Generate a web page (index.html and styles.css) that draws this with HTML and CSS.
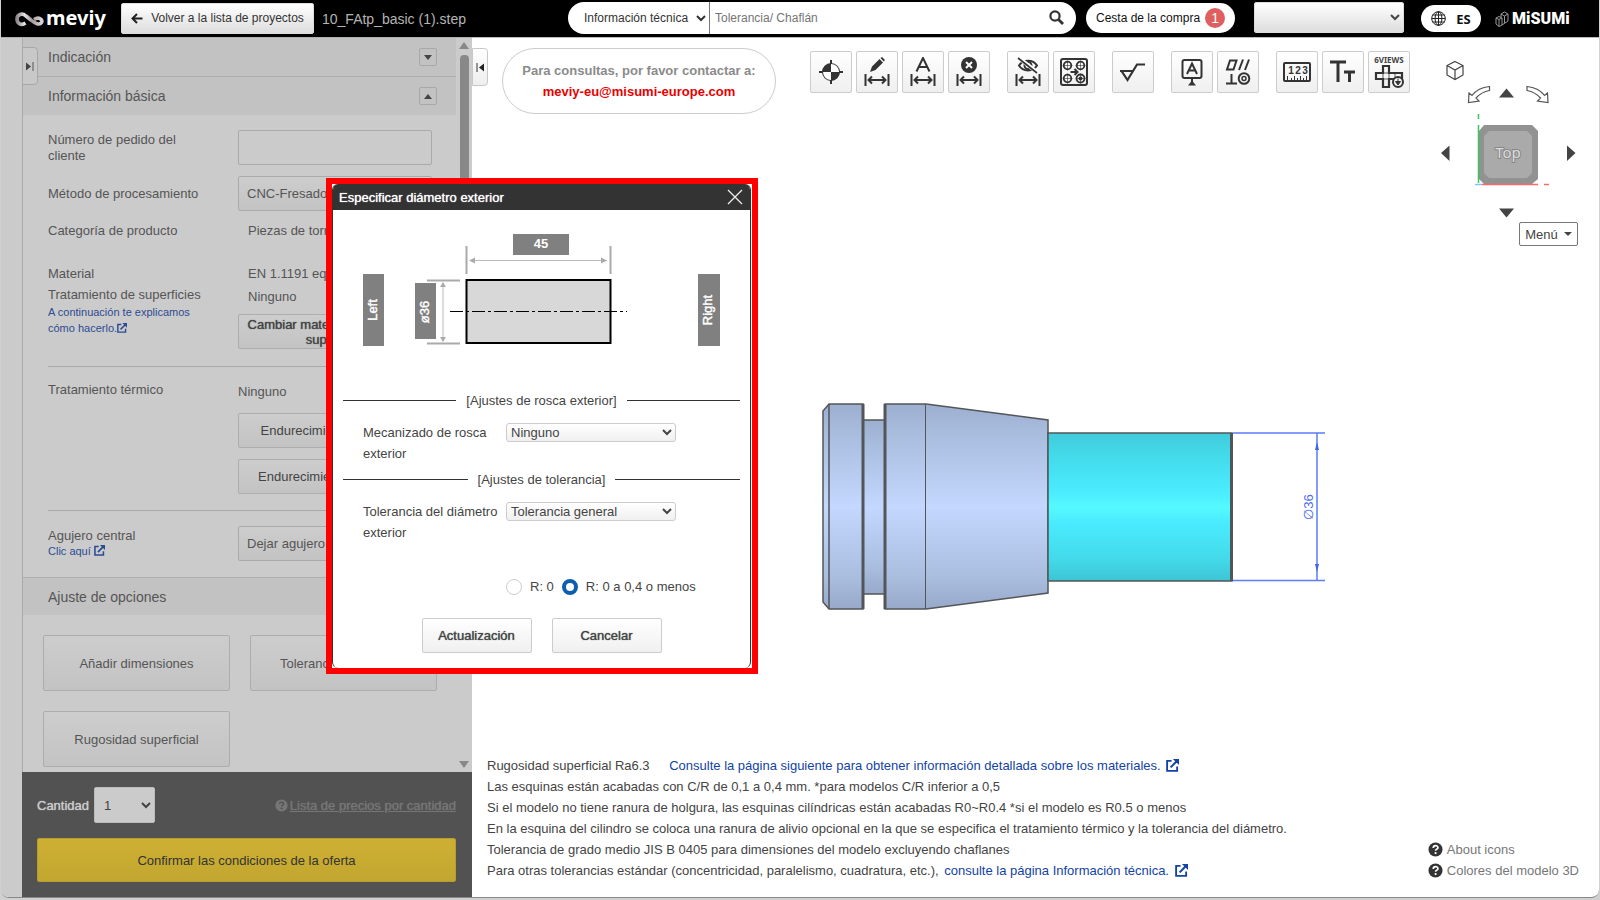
FILE: index.html
```html
<!DOCTYPE html>
<html lang="es">
<head>
<meta charset="utf-8">
<title>meviy</title>
<link rel="stylesheet" href="styles.css">
</head>
<body>
<svg class="defs" width="0" height="0" aria-hidden="true">
  <defs>
    <symbol id="ext" viewBox="0 0 14 14"><path d="M6 2H1.2v10.8H12V8" fill="none" stroke="currentColor" stroke-width="2"/><path d="M5 9l6.500-6.500" stroke="currentColor" stroke-width="2.200"/><path d="M7.500 0H14v6.500z" fill="currentColor"/></symbol>
    <symbol id="help" viewBox="0 0 16 16"><circle cx="8" cy="8" r="7.500" fill="currentColor"/><path d="M5.600 6.300c0-3.200 5-3.200 5-.3 0 1.600-2.500 1.700-2.500 3.300" fill="none" stroke="var(--mark)" stroke-width="1.800"/><circle cx="8.100" cy="11.800" r="1.200" fill="var(--mark)"/></symbol>
    <symbol id="span" viewBox="0 0 26 12"><path d="M1.500 0v12M24.500 0v12M4 6h18M8 2.500L4.500 6 8 9.500M18 2.500L21.500 6 18 9.500" fill="none" stroke="#333" stroke-width="2"/></symbol>
    <linearGradient id="loop"><stop offset="0" stop-color="#8f888d"/><stop offset=".3" stop-color="#e8e4e6"/><stop offset=".6" stop-color="#a39ca1"/><stop offset="1" stop-color="#d8d4d6"/></linearGradient>
  </defs>
</svg>
<div class="app">
  <header class="topbar">
    <a class="brand" href="#"><svg width="29" height="16" viewBox="0 0 29 16"><path d="M10.500 12C6 15 2 12.500 2 8S7 1.500 11 5l5 4c4 3.500 8.500 5.500 10.500 2.500 1.500-3.500-3-6-7.500-3" fill="none" stroke="url(#loop)" stroke-width="3.600"/></svg><span>meviy</span></a>
    <button class="back"><svg width="12" height="11" viewBox="0 0 12 11"><path d="M11.500 5.500H2M6 1L1.500 5.500 6 10" fill="none" stroke="#222" stroke-width="2"/></svg>Volver a la lista de proyectos</button>
    <span class="filename">10_FAtp_basic (1).step</span>
    <form class="search">
      <select aria-label="Tipo de búsqueda"><option>Información técnica</option></select>
      <input type="text" aria-label="Buscar" placeholder="Tolerancia/ Chaflán">
      <button type="button" aria-label="Buscar"><svg width="15" height="15" viewBox="0 0 15 15"><circle cx="6" cy="6" r="4.600" fill="none" stroke="#333" stroke-width="2.200"/><path d="M9.500 9.500l4.500 4.500" stroke="#333" stroke-width="2.800"/></svg></button>
    </form>
    <button class="cart">Cesta de la compra<span class="count">1</span></button>
    <select class="user" aria-label="Usuario"><option></option></select>
    <button class="lang"><svg width="15" height="15" viewBox="0 0 15 15"><g fill="none" stroke="#222"><circle cx="7.500" cy="7.500" r="6.800"/><ellipse cx="7.500" cy="7.500" rx="3.400" ry="6.800"/><path d="M7.500.5v14M.5 7.500h14M1.500 4h12M1.500 11h12"/></g></svg>ES</button>
    <a class="misumi" href="#"><svg width="14" height="16" viewBox="0 0 14 16"><g fill="none" stroke="#999" stroke-width="1"><path d="M1 7l3-1.500L7 7v7l-3 1.500L1 13zM1 7l3 1.500L7 7M4 8.500v7M6 3l3.500-2L13 3v7l-6 4M6 3v3.500M6 3l3.500 2L13 3M9.500 5v7"/></g></svg><span>MiSUMi</span></a>
  </header>

  <div class="work">
    <aside class="panel">
      <button class="tab tab-left" aria-label="Mostrar panel"><svg width="8" height="9" viewBox="0 0 8 9"><path d="M0 .5l5 4-5 4z" fill="#444"/><path d="M7 0v9" stroke="#555" stroke-width="1"/></svg></button>
      <div class="scroll">
        <div class="content">
          <h2 class="head head-line">Indicación<button aria-label="Abrir"><i class="down"></i></button></h2>
          <h2 class="head">Información básica<button aria-label="Cerrar"><i class="up"></i></button></h2>
          <div class="form">
            <div class="row row-first"><label for="order">Número de pedido del<br>cliente</label><input id="order" class="field" type="text"></div>
            <div class="row row-mid"><label for="method">Método de procesamiento</label><select id="method" class="field"><option>CNC-Fresado</option></select></div>
            <div class="row row-cat"><span>Categoría de producto</span><span class="inset">Piezas de torneado</span></div>
            <div class="row row-mat">
              <div><p class="line">Material</p><p class="line-2">Tratamiento de superficies</p><a class="small" href="#">A continuación te explicamos cómo hacerlo.<svg width="10" height="10"><use href="#ext"/></svg></a></div>
              <div><p class="line inset">EN 1.1191 equiv.</p><p class="line-3 inset">Ninguno</p><button class="field btn wrap firm">Cambiar material / tratamiento<br>superficial</button></div>
            </div>
            <div class="row row-heat">
              <p class="line">Tratamiento térmico</p>
              <div class="stack"><p class="line">Ninguno</p><button class="field btn">Endurecimiento inducción</button><button class="field btn">Endurecimiento y revenido</button></div>
            </div>
            <div class="row row-hole">
              <div><label for="hole">Agujero central</label><a class="small tight" href="#">Clic aquí <svg width="11" height="11"><use href="#ext"/></svg></a></div>
              <select id="hole" class="field"><option>Dejar agujero central</option></select>
            </div>
          </div>
          <h2 class="head head-top">Ajuste de opciones</h2>
          <div class="options"><button class="btn">Añadir dimensiones</button><button class="btn">Tolerancia geométrica</button><button class="btn">Rugosidad superficial</button></div>
        </div>
        <div class="bar"><i class="up"></i><div class="thumb"></div><i class="down"></i></div>
      </div>
      <footer class="order">
        <div class="qty"><label class="firm" for="qty">Cantidad</label><select id="qty"><option>1</option></select><a href="#"><svg width="13" height="13"><use href="#help"/></svg><span>Lista de precios por cantidad</span></a></div>
        <button class="confirm">Confirmar las condiciones de la oferta</button>
      </footer>
    </aside>

    <main class="view">
      <button class="tab tab-right" aria-label="Ocultar panel"><svg width="8" height="9" viewBox="0 0 8 9"><path d="M8 .5l-5 4 5 4z" fill="#222"/><path d="M1 0v9" stroke="#333" stroke-width="1"/></svg></button>
      <div class="tools">
        <p class="contact">Para consultas, por favor contactar a:<br><a href="#">meviy-eu@misumi-europe.com</a></p>
        <div class="group">
          <button aria-label="Origen"><svg width="26" height="26" viewBox="0 0 26 26"><path d="M13 1v24M1 13h24" stroke="#333" stroke-width="2"/><circle cx="13" cy="13" r="8" fill="#fff" stroke="#333" stroke-width="2"/><path d="M13 13V5a8 8 0 0 1 8 8zM13 13H5a8 8 0 0 0 8 8z" fill="#fff"/><path d="M13 13V5a8 8 0 0 0-8 8zM13 13h8a8 8 0 0 1-8 8z" fill="#333"/></svg></button>
          <button aria-label="Editar cota"><svg width="26" height="30" viewBox="0 0 26 30"><path d="M6 15l2-5.500L15.500 2l3.500 3.500L11.500 13z M16.500 1L18 0l3 3-1.200 1.500z" fill="#333"/><use href="#span" y="17" width="26" height="12"/></svg></button>
          <button aria-label="Cota automática"><svg width="26" height="30" viewBox="0 0 26 30"><path d="M6.500 14.500L13 1l6.500 13.500M9 10h8" fill="none" stroke="#333" stroke-width="2"/><use href="#span" y="17" width="26" height="12"/></svg></button>
          <button aria-label="Borrar cota"><svg width="26" height="30" viewBox="0 0 26 30"><circle cx="13" cy="8" r="8" fill="#333"/><path d="M10 5l6 6M16 5l-6 6" stroke="#fff" stroke-width="2"/><use href="#span" y="17" width="26" height="12"/></svg></button>
        </div>
        <div class="group">
          <button aria-label="Ocultar cotas"><svg width="26" height="30" viewBox="0 0 26 30"><path d="M4 8.500C8 2 18 2 22 8.500 18 15 8 15 4 8.500z" fill="none" stroke="#333" stroke-width="2"/><circle cx="13" cy="8.500" r="3.500" fill="none" stroke="#333" stroke-width="2"/><path d="M4 1l19 15" stroke="#fff" stroke-width="4"/><path d="M3 1l19 15" stroke="#333" stroke-width="1.600"/><use href="#span" y="17" width="26" height="12"/></svg></button>
          <button aria-label="Agujeros"><svg width="28" height="28" viewBox="0 0 28 28"><rect x="1" y="1" width="26" height="26" rx="2" fill="none" stroke="#333" stroke-width="2"/><g fill="none" stroke="#333" stroke-width="1.800"><circle cx="7.500" cy="7.500" r="3.800"/><circle cx="20.500" cy="7.500" r="3.800"/><circle cx="7.500" cy="20.500" r="3.800"/><circle cx="20.500" cy="20.500" r="4"/><path d="M10.500 14h7M14.500 11l3 3-3 3" stroke-width="2"/></g><g stroke="#333" stroke-width=".6"><path d="M2.500 7.500h10M7.500 2.500v10M15.500 7.500h10M20.500 2.500v10M2.500 20.500h10M7.500 15.500v10M15.500 20.500h10M20.500 15.500v10"/></g><circle cx="20.500" cy="20.500" r="2" fill="#333"/></svg></button>
        </div>
        <div class="group"><button aria-label="Rugosidad"><svg width="26" height="22" viewBox="0 0 26 22"><path d="M0 10h13M1.500 10l6 9L17 3.500h8" fill="none" stroke="#333" stroke-width="2.200"/></svg></button></div>
        <div class="group">
          <button aria-label="Referencia"><svg width="22" height="28" viewBox="0 0 22 28"><rect x="1.500" y="2" width="19" height="18" rx="2" fill="none" stroke="#333" stroke-width="2"/><path d="M6 16L11 5.500 16 16M8 12.500h6M11 20v5" fill="none" stroke="#333" stroke-width="2"/><path d="M7 27.500l4-5 4 5z" fill="#333"/></svg></button>
          <button aria-label="Tolerancia geométrica"><svg width="26" height="28" viewBox="0 0 26 28"><path d="M2 11.500L5 2.500h6.500l-3 9zM14 12l4-10.500M20 12l4-10.500M6.500 16v9M1 25.500h11" fill="none" stroke="#333" stroke-width="2"/><circle cx="19" cy="20.500" r="5.300" fill="none" stroke="#333" stroke-width="2"/><circle cx="19" cy="20.500" r="2" fill="none" stroke="#333" stroke-width="1.500"/></svg></button>
        </div>
        <div class="group">
          <button aria-label="Medir"><svg width="28" height="20" viewBox="0 0 28 20"><rect x="1" y="1" width="26" height="18" rx="1" fill="none" stroke="#333" stroke-width="2"/><path d="M4.500 14v4M8.500 16v2M11.500 14v4M14.500 16v2M17.500 14v4M20.500 16v2M23.500 14v4" stroke="#333"/><g font-size="10" font-weight="700" fill="#333" text-anchor="middle"><text x="8" y="12">1</text><text x="15" y="12">2</text><text x="22" y="12">3</text></g></svg></button>
          <button aria-label="Texto"><svg width="26" height="24" viewBox="0 0 26 24"><path d="M0 2h16M8 2v20M14 12h11M19.500 12v10" stroke="#333" stroke-width="3" fill="none"/></svg></button>
          <button aria-label="Seis vistas" class="six"><span>6VIEWS</span><svg width="30" height="25" viewBox="0 0 30 25"><path d="M9 2h6v7h13v6H15v8H9v-8H2V9h7z" fill="none" stroke="#333" stroke-width="2.200"/><path d="M9 9h6v6H9zM21 9v6" fill="none" stroke="#333" stroke-width=".8"/><circle cx="24" cy="18" r="5" fill="#f4f4f4" stroke="#333" stroke-width="2"/><path d="M24 14.500v3M21.500 17.500h5L24 21z" fill="#333" stroke="#333"/></svg></button>
        </div>
      </div>

      <div class="navigator">
        <svg width="145" height="160" viewBox="1436 58 145 160" aria-label="Top">
          <g fill="none" stroke="#444" stroke-width="1.200"><path d="M1455 61.500l8 4v9.500l-8 4.500-8-4.500v-9.500zM1447 65.500l8 4.500 8-4.500M1455 70v9.500"/><path d="M1468.500 102.500l.5-9.500 3 2.500q6-8 17.500-9v4q-8 1.500-13.500 7.500l3 3zM1548 102.500l-.5-9.500-3 2.500q-6-8-17.500-9v4q8 1.500 13.500 7.500l-3 3z" stroke="#555"/></g>
          <path d="M1499 97.500l7.500-9 7.500 9zM1499 208.500l7.500 9 7.500-9zM1449.500 145.500l-8.500 7.500 8.500 8zM1567 145.500l8.500 7.500-8.500 8z" fill="#444"/>
          <path d="M1484 125h48l6 6v48l-6 5h-48l-5-5v-48z" fill="#929292"/><path d="M1489 131h38l5 5v37l-5 5h-38l-5-5v-37z" fill="#aaa"/>
          <path d="M1478.500 114v5M1478.500 125v58" stroke="#35c759" stroke-width="1.500"/><path d="M1482 184.500h56M1544 184.500h5" stroke="#f66a6a" stroke-width="1.500"/><path d="M1475 184.500h7" stroke="#8bbcff" stroke-width="1.500"/>
          <text x="1508" y="158" text-anchor="middle" font-size="15" fill="#ddd" stroke="#888" stroke-width="2" paint-order="stroke" class="cube-text">Top</text>
        </svg>
        <button>Menú<i class="down"></i></button>
      </div>

      <div class="stage">
        <svg class="model" width="550" height="250" viewBox="800 380 550 250">
          <defs>
            <linearGradient id="steel" x2="0" y2="1"><stop offset="0" stop-color="#9dafcf"/><stop offset=".15" stop-color="#a9bddf"/><stop offset=".5" stop-color="#c4d8ff"/><stop offset=".85" stop-color="#a9bddf"/><stop offset="1" stop-color="#98a9ca"/></linearGradient>
            <linearGradient id="cyan" x2="0" y2="1"><stop offset="0" stop-color="#40cbdc"/><stop offset=".15" stop-color="#43daea"/><stop offset=".4" stop-color="#4aecff"/><stop offset=".5" stop-color="#55faff"/><stop offset=".6" stop-color="#4aecff"/><stop offset=".85" stop-color="#43daea"/><stop offset="1" stop-color="#3dc4d4"/></linearGradient>
          </defs>
          <g stroke="#535558" stroke-width="1.500">
            <rect x="863" y="420" width="22" height="174" fill="url(#steel)"/>
            <path d="M829 404h34v205h-34l-6-7V411z" fill="url(#steel)"/><path d="M829 404v205"/>
            <path d="M885 404h41l122 16v173l-122 16h-41z" fill="url(#steel)"/><path d="M925.500 404v205" stroke-width="1"/>
            <rect x="1048" y="433" width="184" height="148" fill="url(#cyan)"/>
            <path d="M863 404v205M885 404v205M1231.500 433v148" stroke-width="3"/>
          </g>
          <g stroke="#5c7cf5" stroke-width="1.500"><path d="M1233 433h92M1233 580.500h92M1317 433v147"/></g>
          <path d="M1317 442l-2 8h4zM1317 572l-2-8h4z" fill="#3f64f0"/>
          <text transform="translate(1313 507) rotate(-90)" text-anchor="middle" font-size="13" fill="#4a6bf5">∅36</text>
        </svg>
      </div>

      <div class="notes">
        <div>
          <p>Rugosidad superficial Ra6.3 <a class="lead" href="#">Consulte la página siguiente para obtener información detallada sobre los materiales. <svg width="13" height="13"><use href="#ext"/></svg></a></p>
          <p>Las esquinas están acabadas con C/R de 0,1 a 0,4 mm. *para modelos C/R inferior a 0,5</p>
          <p>Si el modelo no tiene ranura de holgura, las esquinas cilíndricas están acabadas R0~R0.4 *si el modelo es R0.5 o menos</p>
          <p>En la esquina del cilindro se coloca una ranura de alivio opcional en la que se especifica el tratamiento térmico y la tolerancia del diámetro.</p>
          <p>Tolerancia de grado medio JIS B 0405 para dimensiones del modelo excluyendo chaflanes</p>
          <p>Para otras tolerancias estándar (concentricidad, paralelismo, cuadratura, etc.), <a class="next" href="#">consulte la página Información técnica. <svg width="13" height="13"><use href="#ext"/></svg></a></p>
        </div>
        <div class="guides"><a href="#"><svg width="15" height="15"><use href="#help"/></svg>About icons</a><a href="#"><svg width="15" height="15"><use href="#help"/></svg>Colores del modelo 3D</a></div>
      </div>
    </main>
  </div>

  <section class="dialog" role="dialog" aria-labelledby="dlg">
    <div class="sheet">
      <header><h1 id="dlg" class="firm">Especificar diámetro exterior</h1><button aria-label="Cerrar"><svg width="16" height="16" viewBox="0 0 16 16"><path d="M1 1l14 14M15 1L1 15" stroke="#eee" stroke-width="1.300"/></svg></button></header>
      <svg class="diagram" viewBox="333 210 418 180" width="418" height="180">
        <g fill="#808080"><rect x="513" y="234" width="56" height="21"/><rect x="363" y="274" width="21" height="72"/><rect x="415" y="283" width="21" height="56"/><rect x="698" y="274" width="22" height="72"/></g>
        <rect x="466.500" y="280" width="144" height="63" fill="#d8d8d8" stroke="#000" stroke-width="2"/>
        <path d="M450 311.500h177" stroke="#000" stroke-width="1.200" stroke-dasharray="13 3 3 3" />
        <path d="M466.500 246v28M610.500 246v28M427 280.500h33M427 343.500h33" stroke="#aaa" stroke-width="2"/>
        <path d="M470 260.500h137M443 283v58" stroke="#bbb"/>
        <path d="M469 260.500l6-3v6zM607 260.500l-6-3v6zM443 282l-3 5h6zM443 342l-3-5h6z" fill="#aaa"/>
        <g fill="#fff" font-size="13" text-anchor="middle"><text x="541" y="248" font-weight="700">45</text><text class="mark" transform="translate(377 310) rotate(-90)">Left</text><text class="mark" transform="translate(429 312) rotate(-90)">ø36</text><text class="mark" transform="translate(712 310) rotate(-90)">Right</text></g>
      </svg>
      <h3>[Ajustes de rosca exterior]</h3>
      <div class="pair"><label for="thread">Mecanizado de rosca exterior</label><select id="thread"><option>Ninguno</option></select></div>
      <h3 class="second">[Ajustes de tolerancia]</h3>
      <div class="pair"><label for="tol">Tolerancia del diámetro exterior</label><select id="tol"><option>Tolerancia general</option></select></div>
      <div class="radios"><label><input type="radio" name="r">R: 0</label><label><input type="radio" name="r" checked>R: 0 a 0,4 o menos</label></div>
      <div class="actions"><button class="firm">Actualización</button><button class="firm">Cancelar</button></div>
    </div>
  </section>
</div>
</body>
</html>
```

FILE: styles.css
```css
* { box-sizing: border-box; }
body { margin: 0; background: #d0d0d0; }
body, button, input, select { font-family: "Liberation Sans", Arial, sans-serif; font-size: 13px; color: #444; }
button { padding: 0; cursor: pointer; }
h1, h2, h3, p { margin: 0; font-weight: 400; }
a { color: #1243a5; text-decoration: none; }
.defs { position: absolute; }
.firm { text-shadow: 0 0 1px currentColor; }
.mark { stroke: #fff; stroke-width: 0.4; }
.up, .down { display: block; width: 0; height: 0; border: 5px solid transparent; }
.up { border-top: 0; border-bottom-color: #444; }
.down { border-bottom: 0; border-top-color: #444; }

.app { position: relative; display: flex; flex-direction: column; height: calc(100vh - 2px); min-height: 780px; margin: 0 1px; background: #fff; border-bottom: 1px solid #888; border-radius: 0 0 8px 8px; overflow: hidden; }

.topbar { display: flex; align-items: center; height: 37px; padding-left: 14px; background: #000; flex: none; }
.brand { display: flex; align-items: center; gap: 2px; width: 106px; color: #fff; font: 700 20px/24px "Noto Sans", sans-serif; }
.brand span { padding-bottom: 2px; }
.back, .user { height: 31px; border: 1px solid #ddd; border-radius: 2px; background: linear-gradient(#fff, #ddd); }
.back { display: flex; align-items: center; justify-content: center; gap: 8px; width: 193px; margin-bottom: 1px; font-size: 12px; color: #333; }
.filename { width: 254px; padding-left: 8px; font-size: 14px; color: #b4b4b4; }
.search { display: flex; flex: 1; height: 32px; max-width: 508px; margin-bottom: 2px; border-radius: 16px; background: #fff; overflow: hidden; }
.search select { width: 142px; padding-left: 12px; border: 0; border-right: 1px solid #777; background: transparent; font-size: 12px; color: #333; }
.search input { flex: 1; min-width: 0; padding: 0 5px; border: 0; font-size: 12px; }
.search button { width: 40px; border: 0; background: transparent; }
.search button svg { display: block; margin: auto; }
.cart { display: flex; align-items: center; gap: 5px; height: 30px; margin: 0 0 2px 10px; padding: 0 10px; border: 0; border-radius: 15px; background: #fff; font-size: 12px; color: #111; }
.count { width: 20px; height: 20px; border-radius: 50%; background: #df5f60; color: #fff; font-size: 14px; line-height: 20px; }
.user { width: 150px; margin: 0 0 2px 19px; }
.lang { display: flex; align-items: center; justify-content: center; gap: 10px; width: 60px; height: 27px; margin-left: 17px; border: 0; border-radius: 14px; background: #fff; font: 700 13px "Noto Sans", sans-serif; color: #111; }
.misumi { display: flex; align-items: center; gap: 3px; margin: 0 auto 0 14px; color: #fff; font: 900 16px "Roboto", sans-serif; }

.work { display: flex; flex: 1; min-height: 0; }
.panel { position: relative; display: flex; flex-direction: column; width: 471px; flex: none; padding-left: 21px; background: #cbcbcb; border-top: 1px solid #b0b0b0; color: #555; }
.tab { display: flex; align-items: center; justify-content: center; width: 16px; height: 38px; border: 1px solid #c8c8c8; border-radius: 0 4px 4px 0; background: linear-gradient(#fff, #eee); }
.tab-left { position: absolute; left: 21px; top: 9px; border-color: #a8a8a8; background: #c8c8c8; }
.tab-right { position: absolute; left: 0; top: 10px; }
.scroll { display: flex; flex: 1; min-height: 0; overflow: hidden; border-left: 1px solid #aaa; }
.content { flex: 1; min-width: 0; }
.head { display: flex; align-items: center; justify-content: space-between; height: 38px; padding: 0 19px 0 25px; background: #c2c2c2; font-size: 14px; }
.head-line { border-bottom: 1px solid #aeaeae; height: 39px; }
.head-top { border-top: 1px solid #aeaeae; }
.head button { display: flex; align-items: center; justify-content: center; width: 18px; height: 18px; border: 1px solid #a8a8a8; border-radius: 2px; background: transparent; }
.head i { border-left-width: 4px; border-right-width: 4px; }
.form { padding: 15px 25px 0; }
.row { display: grid; grid-template-columns: 190px 194px; align-items: start; }
.row-first { line-height: 16px; }
.row-first label { padding-top: 2px; }
.row-mid { margin-top: 11px; align-items: center; }
.row-cat { margin-top: 11px; line-height: 18px; }
.row-mat { margin-top: 24px; padding-bottom: 17px; }
.row-heat { padding: 13px 0 16px; border-top: 1px solid #a8a8a8; }
.row-hole { padding: 15px 0 16px; border-top: 1px solid #a8a8a8; }
.row-hole label { display: block; padding-top: 1px; line-height: 18px; }
.field { width: 100%; height: 35px; border: 1px solid #aaa; border-radius: 2px; background: transparent; color: #555; }
select.field { padding-left: 4px; background: linear-gradient(#cdcdcd, #c3c3c3); }
.inset { padding-left: 10px; }
.line { line-height: 20px; }
.line-2 { margin-top: 2px; line-height: 18px; }
.line-3 { margin: 4px 0 8px; line-height: 18px; }
.small { display: block; width: 150px; font-size: 11px; line-height: 16px; color: #2b4c93; }
.small svg { vertical-align: -1px; }
.tight { line-height: 13px; }
.btn { border: 1px solid #adadad; border-radius: 2px; background: linear-gradient(#cdcdcd, #c3c3c3); color: #444; }
.wrap { line-height: 15px; text-align: center; }
.stack { display: grid; gap: 11px; padding-top: 2px; }
.options { display: grid; grid-template-columns: 187px 187px; gap: 20px; padding: 20px 20px 0; }
.options .btn { height: 56px; color: #555; }
.bar { display: flex; flex-direction: column; align-items: center; width: 16px; padding: 4px 0; flex: none; }
.bar i { border-left-width: 5px; border-right-width: 5px; }
.bar .up { border-bottom: 7px solid #888; }
.bar .down { border-top: 7px solid #888; }
.thumb { width: 9px; height: 260px; margin: 6px 0 auto; border-radius: 4px; background: #888; }
.order { padding: 15px 16px 15px 15px; height: 125px; background: #525252; flex: none; }
.qty { display: flex; align-items: center; gap: 5px; color: #ccc; }
.qty select { width: 61px; height: 36px; padding-left: 5px; border: 1px solid #bbb; border-radius: 2px; background: #cbcbcb; }
.qty a { display: flex; align-items: center; gap: 2px; margin-left: auto; color: #767676; --mark: #525252; }
.qty a span { text-decoration: underline; text-shadow: 0 0 1px currentColor; }
.confirm { width: 100%; height: 44px; margin-top: 15px; border: 1px solid #b79c2e; border-radius: 2px; background: linear-gradient(#cdb033, #c3a62f); color: #333; }

.view { position: relative; display: flex; flex-direction: column; flex: 1; min-width: 0; border-top: 1px solid #bbb; }
.tools { display: flex; align-items: flex-start; gap: 17px; padding: 10px 0 0 30px; }
.contact { width: 274px; height: 66px; margin-right: 17px; padding-top: 11px; border: 1px solid #ccc; border-radius: 33px; color: #8b8b8b; font-weight: 700; line-height: 21px; text-align: center; }
.contact a { color: #e80000; }
.group { display: flex; gap: 4px; padding-top: 3px; }
.group button { display: flex; flex-direction: column; align-items: center; justify-content: center; width: 42px; height: 42px; border: 1px solid #ccc; border-radius: 2px; background: linear-gradient(#fff, #efefef); }
.six span { font: 700 8px/9px "Noto Sans", sans-serif; }
.navigator { position: absolute; top: 20px; right: 18px; display: flex; flex-direction: column; align-items: flex-end; gap: 4px; }
.navigator button { display: flex; align-items: center; justify-content: center; gap: 6px; width: 59px; height: 24px; margin-right: 3px; border: 1px solid #777; border-radius: 2px; background: #fff; }
.navigator i { border-width: 4px; border-bottom: 0; }
.cube-text { font-family: "Noto Sans", sans-serif; }
.stage { display: flex; align-items: center; justify-content: center; flex: 1; min-height: 0; padding: 140px 0 0 78px; }
.notes { display: flex; align-items: flex-end; justify-content: space-between; padding: 0 20px 16px 15px; line-height: 21px; }
.notes p { white-space: nowrap; }
.notes .lead { margin-left: 16px; }
.notes .next { margin-left: 2px; }
.notes p svg { margin-left: 2px; vertical-align: -2px; }
.guides a { display: flex; align-items: center; gap: 4px; color: #777; }
.guides svg { color: #333; --mark: #fff; }

.dialog { position: absolute; left: 325px; top: 178px; width: 432px; border: 6px solid #f00; background: #fff; }
.sheet { min-height: 484px; margin-right: 1px; padding-bottom: 15px; border: 1px solid #333; border-top: 0; border-bottom: 0; border-radius: 6px; overflow: hidden; }
.sheet header { display: flex; align-items: center; justify-content: space-between; height: 26px; padding: 0 7px 0 6px; background: #333; }
.sheet h1 { font-size: 13px; color: #fff; }
.sheet header button { height: 16px; border: 0; background: transparent; }
.diagram { display: block; }
.sheet h3 { display: flex; align-items: center; gap: 10px; padding: 0 10px; font-size: 13px; line-height: 21px; }
.sheet h3::before, .sheet h3::after { content: ""; flex: 1; height: 1px; background: #333; }
.sheet .second { margin-top: 5px; }
.pair { display: flex; align-items: flex-start; padding: 11px 30px 0; }
.pair label { width: 143px; line-height: 21px; }
.pair select { width: 170px; height: 19px; margin-top: 1px; border: 1px solid #ccc; border-radius: 3px; background: linear-gradient(#fff, #f0f0f0); }
.radios { display: flex; gap: 8px; margin: 33px 0 21px 173px; }
.radios label { display: flex; align-items: center; gap: 8px; height: 21px; }
.radios input { appearance: none; width: 16px; height: 16px; margin: 0; border: 1px solid #ccc; border-radius: 50%; background: #fff; }
.radios input:checked { border: 4px solid #0b5fae; }
.actions { display: flex; justify-content: center; gap: 20px; }
.actions button { width: 110px; height: 35px; border: 1px solid #ccc; border-radius: 2px; background: linear-gradient(#fff, #f0f0f0); }
```
